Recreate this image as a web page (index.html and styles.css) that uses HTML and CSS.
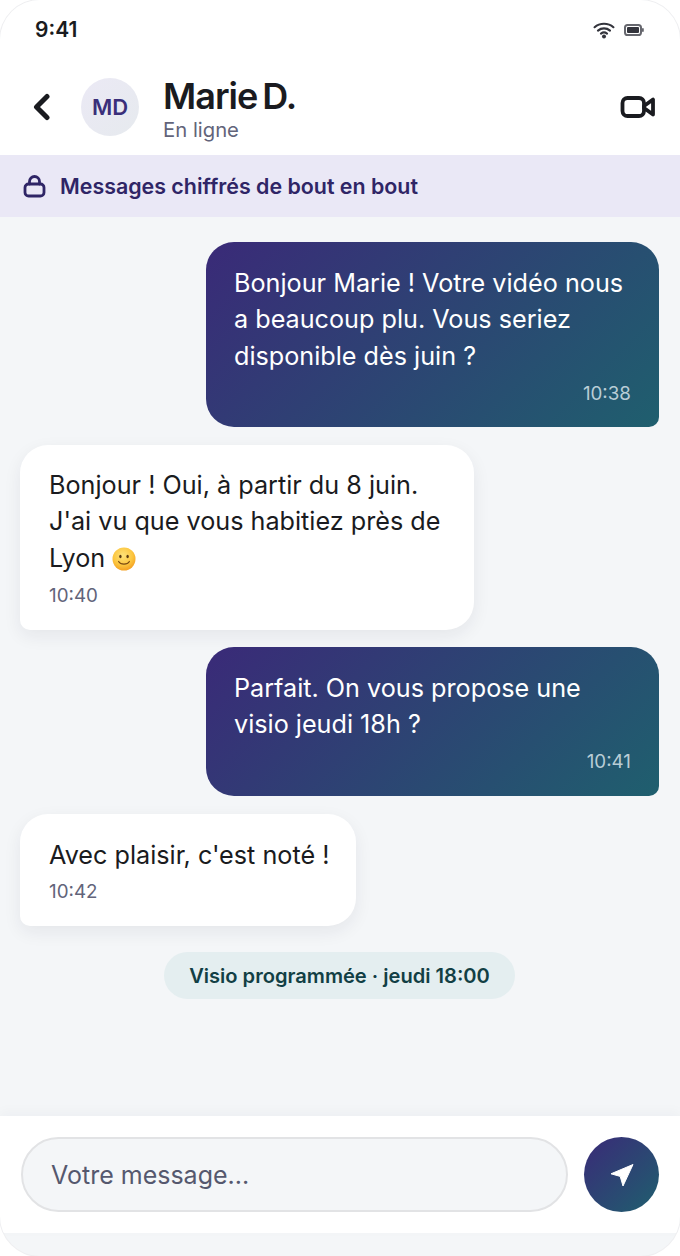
FILE: index.html
```html
<!DOCTYPE html>
<html lang="fr">
<head>
<meta charset="utf-8">
<title>Marie D.</title>
<link rel="stylesheet" href="styles.css">
</head>
<body>
<div class="phone">
  <div class="top">
    <div class="status">
      <span class="time">9:41</span>
      <span class="status-icons">
        <svg class="wifi" width="22" height="18" viewBox="0 0 22 18" fill="none" stroke="#33343c" stroke-width="2.2" stroke-linecap="round"><path d="M1.6 6.2C6.8 1.6 15.2 1.6 20.4 6.2"/><path d="M5 9.6C8.4 6.7 13.6 6.7 17 9.6"/><path d="M8 12.6C9.8 11.2 12.2 11.2 14 12.6"/><circle cx="11" cy="15.6" r="2" fill="#33343c" stroke="none"/></svg>
        <svg class="battery" width="20" height="12" viewBox="0 0 20 12" fill="none"><rect x="1" y="1" width="16" height="10" rx="2.6" stroke="#66676e" stroke-width="2"/><rect x="3" y="3" width="12" height="6" rx="1" fill="#33343c"/><rect x="18" y="4" width="1.8" height="4" rx=".9" fill="#66676e"/></svg>
      </span>
    </div>
    <header class="header">
      <svg class="back" width="22" height="28" viewBox="0 0 22 28" fill="none" stroke="#1a1b20" stroke-width="5" stroke-linecap="round" stroke-linejoin="round"><path d="M16 3.5L5.5 14L16 24.5"/></svg>
      <div class="avatar">MD</div>
      <div class="who">
        <div class="name">Marie D.</div>
        <div class="presence">En ligne</div>
      </div>
      <svg class="video" width="36" height="24" viewBox="0 0 36 24" fill="none" stroke="#1a1b20" stroke-width="3.8" stroke-linejoin="round"><rect x="2.5" y="3" width="21.5" height="18" rx="5"/><path d="M24 11L33 4.5V19.5L24 13Z"/></svg>
    </header>
  </div>
  <div class="banner">
    <svg width="24" height="24" viewBox="0 0 24 24" fill="none" stroke="#2f2566" stroke-width="2.8" stroke-linecap="round"><rect x="3" y="10" width="19" height="12" rx="3.6"/><path d="M7.5 10V7.5a5 5 0 0 1 10 0V10"/></svg>
    <span>Messages chiffrés de bout en bout</span>
  </div>
  <main class="thread">
    <div class="bubble sent b1">
      <p>Bonjour Marie ! Votre vidéo nous a beaucoup plu. Vous seriez disponible dès juin ?</p>
      <div class="stamp">10:38</div>
    </div>
    <div class="bubble received b2">
      <p>Bonjour ! Oui, à partir du 8 juin. J'ai vu que vous habitiez près de Lyon <svg class="emoji" width="24" height="24" viewBox="0 0 24 24"><defs><radialGradient id="face" cx="45%" cy="35%" r="70%"><stop offset="0" stop-color="#fde27a"/><stop offset=".6" stop-color="#fcc63f"/><stop offset="1" stop-color="#f29a1e"/></radialGradient></defs><circle cx="12" cy="12" r="11.5" fill="url(#face)"/><ellipse cx="8.4" cy="9.5" rx="1.2" ry="1.7" fill="#5b3a12"/><ellipse cx="15.6" cy="9.5" rx="1.2" ry="1.7" fill="#5b3a12"/><path d="M6.6 14.4C8.5 18 15.5 18 17.4 14.4" fill="none" stroke="#7a4a12" stroke-width="1.1" stroke-linecap="round"/></svg></p>
      <div class="stamp">10:40</div>
    </div>
    <div class="bubble sent b3">
      <p>Parfait. On vous propose une visio jeudi 18h ?</p>
      <div class="stamp">10:41</div>
    </div>
    <div class="bubble received b4">
      <p>Avec plaisir, c'est noté !</p>
      <div class="stamp">10:42</div>
    </div>
    <div class="pill">Visio programmée · jeudi 18:00</div>
  </main>
  <footer class="composer">
    <div class="field">Votre message...</div>
    <button class="send" type="button" aria-label="Envoyer">
      <svg width="26" height="26" viewBox="0 0 26 26"><path d="M24 2.5L2 11.8L11.2 14.4L14 24Z" fill="#fff" stroke="#fff" stroke-width="1" stroke-linejoin="round"/></svg>
    </button>
  </footer>
  <div class="bottom"></div>
</div>
</body>
</html>
```
FILE: styles.css
```css
* { box-sizing: border-box; }
html, body { margin: 0; padding: 0; background: #fff; }
body { font-family: Inter, "Liberation Sans", sans-serif; overflow: hidden; }
.phone {
  width: 680px;
  height: 1256px;
  border-radius: 40px;
  overflow: hidden;
  background: #f4f6f8;
  display: flex;
  flex-direction: column;
  box-shadow: 0 0 0 1px #efeff1;
}
.top { background: #fff; height: 155px; display: flex; flex-direction: column; }
.status {
  height: 60px;
  padding: 0 36px 0 35px;
  display: flex;
  align-items: center;
  justify-content: space-between;
}
.time { font-size: 21px; font-weight: 600; color: #1a1b20; margin-top: -1px; }
.status-icons { display: flex; align-items: center; gap: 9px; margin-top: -1px; }
.header { flex: 1; display: flex; align-items: center; padding: 0 24px 0 31px; margin-top: -2px; }
.back { margin-right: 28px; }
.avatar {
  width: 58px;
  height: 58px;
  border-radius: 50%;
  background: linear-gradient(135deg, #ebe9f5, #e6eaee);
  color: #3a2f7a;
  font-size: 22px;
  font-weight: 600;
  display: flex;
  align-items: center;
  justify-content: center;
  margin-right: 24px;
}
.who { flex: 1; padding-top: 5px; }
.name { font-size: 36px; line-height: 40px; font-weight: 600; color: #1a1b20; letter-spacing: -1px; word-spacing: -3px; }
.presence { font-size: 20.3px; line-height: 26px; margin-top: 1px; color: #62647a; }
.banner {
  height: 62px;
  background: #eae8f6;
  display: flex;
  align-items: center;
  gap: 14px;
  padding: 0 22px;
  color: #2f2566;
  font-size: 21.4px;
  font-weight: 600;
}
.thread { flex: 1; display: flex; flex-direction: column; padding: 25px 21px 0 20px; align-items: flex-start; }
.bubble { padding: 23px 28px 12px 29px; border-radius: 28px; }
.bubble p { margin: 0; font-size: 25.2px; line-height: 36.25px; }
.stamp { font-size: 18.8px; line-height: 24px; margin-top: 7px; }
.sent {
  align-self: flex-end;
  width: 453px;
  padding-left: 28px;
  background: linear-gradient(135deg, #3a2a78, #1f5f6e);
  border-bottom-right-radius: 10px;
  color: #fff;
}
.sent .stamp { text-align: right; color: #b9cdd6; }
.received {
  padding-right: 20px;
  background: #fff;
  border-bottom-left-radius: 10px;
  color: #1a1b20;
  box-shadow: 0 6px 18px rgba(30, 35, 50, .07);
}
.received .stamp { color: #62647a; }
.b1 { height: 185px; margin-bottom: 18px; }
.b2 { width: 454px; height: 185px; margin-bottom: 17px; padding-top: 22px; }
.b1 .stamp, .b2 .stamp { margin-top: 8px; }
.b3 { height: 149px; margin-bottom: 18px; }
.b4 { width: 336px; height: 112px; margin-bottom: 26px; }
.emoji { vertical-align: -4px; }
.pill {
  align-self: center;
  height: 47px;
  padding: 0 25px;
  border-radius: 24px;
  background: #e4eef0;
  color: #123f45;
  font-size: 20.1px;
  font-weight: 600;
  display: flex;
  align-items: center;
}
.composer {
  height: 117px;
  background: #fff;
  display: flex;
  align-items: center;
  gap: 16px;
  padding: 0 21px;
  box-shadow: 0 -4px 12px rgba(30, 35, 50, .03);
}
.field {
  flex: 1;
  height: 75px;
  border-radius: 38px;
  border: 2px solid #e2e3e5;
  background: #f4f6f8;
  display: flex;
  align-items: center;
  padding: 0 28px;
  color: #55586e;
  font-size: 25px;
}
.send {
  width: 75px;
  height: 75px;
  border-radius: 50%;
  border: 0;
  padding: 0;
  background: linear-gradient(135deg, #3a2a78, #1f5f6e);
  display: flex;
  align-items: center;
  justify-content: center;
}
.bottom { height: 23px; }
```
